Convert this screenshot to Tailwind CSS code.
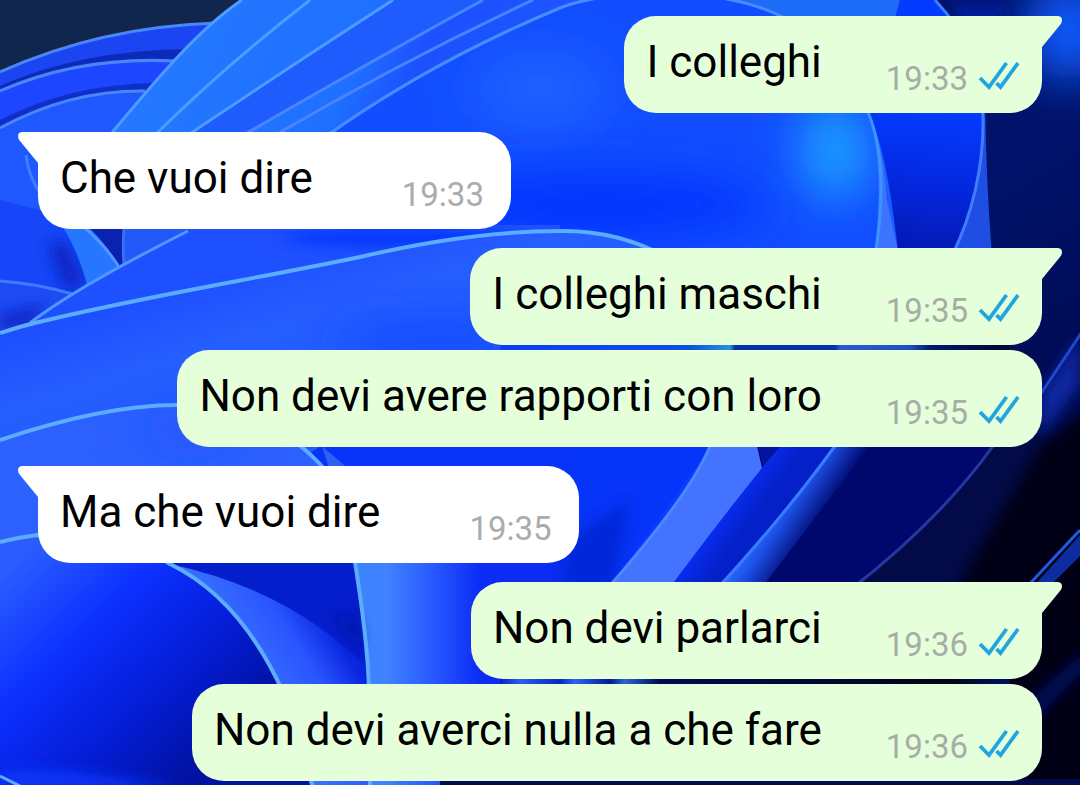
<!DOCTYPE html>
<html lang="it">
<head>
    <meta charset="utf-8"/>
    <meta name="viewport" content="width=device-width, initial-scale=1.0"/>
    <title>Chat</title>
    <script src="https://cdn.jsdelivr.net/npm/@tailwindcss/browser@4"></script>
</head>
<body class="relative min-h-screen overflow-x-hidden bg-[#0a3cff] font-[Roboto,sans-serif] text-black">
    <!-- Wallpaper -->
    <svg class="absolute inset-0 h-full w-full" viewBox="0 0 1080 785" preserveAspectRatio="xMidYMid slice" fill="none" aria-hidden="true">
        <defs>
            <filter id="soft" x="-200" y="-200" width="1500" height="1200" filterUnits="userSpaceOnUse"><feGaussianBlur stdDeviation="24"/></filter>
            <filter id="soft2" x="-200" y="-200" width="1500" height="1200" filterUnits="userSpaceOnUse"><feGaussianBlur stdDeviation="7"/></filter>
            <linearGradient id="blade" x1="200" y1="0" x2="540" y2="160" gradientUnits="userSpaceOnUse">
                <stop offset="0" stop-color="#2477ff"/><stop offset=".45" stop-color="#1e70ff"/><stop offset=".6" stop-color="#1d50ff"/><stop offset="1" stop-color="#1d58ff"/>
            </linearGradient>
            <linearGradient id="navy" x1="860" y1="260" x2="1060" y2="600" gradientUnits="userSpaceOnUse">
                <stop offset="0" stop-color="#00126a"/><stop offset=".6" stop-color="#000a50"/><stop offset="1" stop-color="#000014"/>
            </linearGradient>
            <linearGradient id="fold" x1="940" y1="110" x2="925" y2="256" gradientUnits="userSpaceOnUse">
                <stop offset="0" stop-color="#043cff"/><stop offset=".5" stop-color="#0428e0"/><stop offset="1" stop-color="#0418b0"/>
            </linearGradient>
            <linearGradient id="mid" x1="100" y1="280" x2="180" y2="540" gradientUnits="userSpaceOnUse">
                <stop offset="0" stop-color="#1a48ff"/><stop offset=".35" stop-color="#265eff"/><stop offset=".8" stop-color="#1f5cff"/><stop offset="1" stop-color="#2a60ff"/>
            </linearGradient>
            <linearGradient id="low" x1="20" y1="560" x2="210" y2="760" gradientUnits="userSpaceOnUse">
                <stop offset="0" stop-color="#2a5cff"/><stop offset=".35" stop-color="#0c30ff"/><stop offset=".7" stop-color="#041cd4"/><stop offset="1" stop-color="#0212a0"/>
            </linearGradient>
            <linearGradient id="stem" x1="355" y1="0" x2="480" y2="0" gradientUnits="userSpaceOnUse">
                <stop offset="0" stop-color="#3c84ff"/><stop offset=".25" stop-color="#4082ff"/><stop offset=".6" stop-color="#2a5cff"/><stop offset="1" stop-color="#0c2cf4"/>
            </linearGradient>
            <linearGradient id="leaf" x1="240" y1="660" x2="320" y2="610" gradientUnits="userSpaceOnUse">
                <stop offset="0" stop-color="#3a70ff"/><stop offset=".6" stop-color="#2a55ff"/><stop offset="1" stop-color="#0a26e0"/>
            </linearGradient>
            <linearGradient id="band" x1="690" y1="490" x2="745" y2="530" gradientUnits="userSpaceOnUse">
                <stop offset="0" stop-color="#2a5cff"/><stop offset=".5" stop-color="#0a30f8"/><stop offset="1" stop-color="#0420c8"/>
            </linearGradient>
            <linearGradient id="edge" x1="770" y1="500" x2="815" y2="530" gradientUnits="userSpaceOnUse">
                <stop offset="0" stop-color="#2f74ff"/><stop offset=".4" stop-color="#1c50e8"/><stop offset="1" stop-color="#00086e"/>
            </linearGradient>
            <linearGradient id="gapTop" x1="500" y1="0" x2="1000" y2="0" gradientUnits="userSpaceOnUse">
                <stop offset="0" stop-color="#0c3cf8"/><stop offset=".38" stop-color="#0c50e0"/><stop offset=".46" stop-color="#2894d8"/><stop offset=".47" stop-color="#0430a8"/><stop offset=".67" stop-color="#0430a8"/><stop offset=".68" stop-color="#2c58d0"/><stop offset=".82" stop-color="#2050c0"/><stop offset=".86" stop-color="#001a6c"/><stop offset="1" stop-color="#000838"/>
            </linearGradient>
            <linearGradient id="gapLow" x1="500" y1="0" x2="1000" y2="0" gradientUnits="userSpaceOnUse">
                <stop offset="0" stop-color="#0820c0"/><stop offset=".04" stop-color="#2c5cf0"/><stop offset=".12" stop-color="#0828c0"/><stop offset=".15" stop-color="#2c64f0"/><stop offset=".22" stop-color="#061a90"/><stop offset=".25" stop-color="#2c64d0"/><stop offset=".32" stop-color="#000a50"/><stop offset=".9" stop-color="#000418"/><stop offset="1" stop-color="#001058"/>
            </linearGradient>
        </defs>

        <!-- Night sky corner -->
        <path d="M0 0H260V100H0Z" fill="#11264c"/>

        <!-- Upper left petals -->
        <path d="M0 72Q100 27 215 23L240 140H0Z" fill="#1a45f0"/>
        <path d="M0 86Q80 50 190 49L180 62Q80 56 0 91Z" fill="#0c2bbb"/>
        <path d="M0 91Q80 56 175 61L190 150H0Z" fill="#1c46ff"/>
        <path d="M0 120Q70 84 156 83L145 91Q70 90 0 128Z" fill="#0f30c8"/>
        <path d="M0 128Q70 90 145 91L190 340H0Z" fill="#1f58ff"/>
        <g stroke="#4a86f5" stroke-width="3">
            <path d="M0 72Q100 27 215 23"/>
            <path d="M0 91Q80 56 175 61"/>
            <path d="M0 128Q70 90 145 91"/>
        </g>

        <!-- Large blades -->
        <path d="M242 0C200 28 160 75 110 135Q80 190 124 268L560 231L640 243L700 300H900L890 0Z" fill="url(#blade)"/>
        <path d="M393 0Q300 60 185 137H240L483 0Z" fill="#1f5cfe"/>
        <path d="M325 137Q430 62 560 8Q700 -30 775 15Q900 80 888 260H640L560 231L300 270Z" fill="#124eff"/>
        <ellipse cx="540" cy="90" rx="70" ry="40" fill="#1f60ff" filter="url(#soft)"/>
        <ellipse cx="600" cy="205" rx="170" ry="30" fill="#0430ff" filter="url(#soft)"/>
        <ellipse cx="835" cy="150" rx="34" ry="50" fill="#1fa0ff" filter="url(#soft)"/>
        <path d="M590 -4Q730 -14 785 18H960L935 -4Z" fill="#1d6cf8"/>
        <g stroke="#4d9cff" stroke-width="3">
            <path d="M242 0C200 28 160 75 110 135"/>
            <path d="M310 0Q225 66 155 135"/>
            <path d="M393 0Q300 60 185 137"/>
            <path d="M483 0Q370 62 240 137" stroke="#4a84ff"/>
            <path d="M533 0Q400 62 272 137" stroke="#4a84ff"/>
            <path d="M325 137Q430 62 560 8Q590 -4 640 -6Q730 -10 785 18" stroke="#4a8cff"/>
        </g>

        <!-- Right side fold -->
        <path d="M935 0C1000 60 992 180 952 256L900 270Q888 150 868 112L900 0Z" fill="url(#fold)"/>
        <path d="M935 0H1080V785H860L900 250L952 256C990 180 1000 60 935 0Z" fill="url(#navy)"/>
        <path d="M985 100Q982 190 952 256H992Q986 180 985 100Z" fill="#1e4ee4"/>
        <ellipse cx="1070" cy="30" rx="46" ry="50" fill="#0a5cff" filter="url(#soft)"/>
        <path d="M948 4H1000L1010 24H960Z" fill="#001a9c" filter="url(#soft2)"/>
        <path d="M868 112Q884 150 887 200L899 256H874Q886 170 868 112Z" fill="#3d74ff"/>
        <g stroke-width="3">
            <path d="M868 112Q890 165 875 256" stroke="#3d94ff"/>
            <path d="M935 0Q982 50 983 118Q984 190 952 256" stroke="#3f7cff"/>
        </g>

        <!-- Centre left -->
        <path d="M0 200L60 215L124 268L35 323L0 332Z" fill="#1646f8"/>
        <path d="M48 245L66 240L86 284L64 291Z" fill="#0a28c8" filter="url(#soft2)"/>
        <path d="M0 282Q40 282 72 294L35 323L0 332Z" fill="#1e4cf4"/>
        <path d="M0 314L45 304L35 323L0 332Z" fill="#0a28c8" filter="url(#soft2)"/>
        <path d="M62 226H85Q108 248 119 268L88 288Q78 250 62 226Z" fill="#2676ff"/>
        <path d="M88 226H124V265H118Q108 246 88 226Z" fill="#0a22b0"/>
        <path d="M124 226H200L124 268Z" fill="#2258f8"/>
        <path d="M188 231Q75 288 30 323L560 240V225H190Z" fill="#1f50ff"/>
        <ellipse cx="400" cy="238" rx="120" ry="8" fill="#0634ff" filter="url(#soft2)"/>
        <g stroke="#5098ff" stroke-width="3">
            <path d="M82 225Q105 245 119 267"/>
            <path d="M126 205Q122 240 124 264" stroke="#3e6cf0"/>
            <path d="M0 281Q40 284 72 294" stroke="#4478ff"/>
            <path d="M188 231Q75 288 30 323"/>
            <path d="M26 155Q28 176 42 196" stroke="#3c80ff"/>
        </g>

        <!-- Wide centre petal -->
        <path d="M0 332L35 323L360 257Q470 231 560 231Q620 230 672 260L760 360L708 450L600 600H0Z" fill="#0834f8"/>
        <path d="M0 332L35 323L360 257Q470 231 560 231Q620 230 672 260L640 350H470L310 453L327 480L160 560L0 545Z" fill="url(#mid)"/>
        <ellipse cx="440" cy="340" rx="110" ry="10" fill="#0c34ff" filter="url(#soft)"/>
        <path d="M0 440Q105 405 176 405Q270 405 327 472L350 570H0Z" fill="#2c60ff"/>
        <ellipse cx="190" cy="430" rx="50" ry="10" fill="#1f4cf8" filter="url(#soft)"/>
        <g stroke="#5cacff" stroke-width="4">
            <path d="M0 333Q18 327 35 323C140 297 250 280 360 257Q470 231 560 231Q620 230 672 260"/>
            <path d="M0 440Q105 405 176 405Q270 405 327 472"/>
        </g>
        <path d="M322 446L352 472H330Z" fill="#2c60f4"/>

        <!-- Lower left -->
        <path d="M150 555H480V785H200Z" fill="#041ecc"/>
        <path d="M353 555Q368 640 369 692V785H600V500H353Z" fill="url(#stem)"/>
        <path d="M170 564Q290 590 365 666L370 785H280Z" fill="url(#leaf)"/>
        <path d="M335 612L358 622L361 652Z" fill="#0212a0" filter="url(#soft2)"/>
        <path d="M0 542Q20 537 38 535Q120 530 170 564Q240 598 283 692L310 785H0Z" fill="url(#low)"/>
        <path d="M0 772Q60 764 180 790H0Z" fill="#0a34f8" filter="url(#soft2)"/>
        <g stroke="#5cacff" stroke-width="4">
            <path d="M0 542Q20 537 38 535Q120 530 170 564Q240 598 283 692L314 790"/>
            <path d="M353 550Q368 640 369 692L370 790"/>
            <path d="M0 776L24 788" stroke-width="3"/>
        </g>

        <!-- Lower right ribbons -->
        <path d="M578 446H710L606 590H560Z" fill="#0634f8"/>
        <path d="M570 540L630 500L612 590H560Z" fill="#0628d8" filter="url(#soft2)"/>
        <path d="M755 440H1000V600H640Z" fill="#00086e"/>
        <path d="M780 446L660 590H720L835 446Z" fill="url(#band)"/>
        <path d="M835 446Q785 515 716 590H760L870 446Z" fill="url(#edge)"/>
        <path d="M710 446Q690 495 606 590H668Q720 520 762 468L757 446Z" fill="#4474ff"/>
        <path d="M758 446H780L763 466Z" fill="#0414a0"/>
        <path d="M993 446Q940 520 850 590H1080V446Z" fill="#020a48"/>
        <path d="M1040 446L950 600H1100V400Z" fill="#000018" filter="url(#soft2)"/>
        <path d="M1080 336L1040 395V436L1080 385Z" fill="#0a28a0" filter="url(#soft2)"/>
        <path d="M1080 535L1030 590H1046L1080 556Z" fill="#0c2ca0"/>
        <path d="M1030 700L1085 650V670L1030 725Z" fill="#04085c" filter="url(#soft2)"/>
        <g stroke-width="3">
            <path d="M710 446Q690 495 606 590" stroke="#4c88ff"/>
            <path d="M835 446Q785 515 716 590" stroke="#3a7cff"/>
            <path d="M993 446Q940 520 850 590" stroke="#2438a0"/>
            <path d="M1080 530L1024 590" stroke="#2058e0"/>
            <path d="M1082 332L1040 395" stroke="#1c48d0"/>
        </g>

        <!-- Slivers between stacked bubbles -->
        <path d="M500 343H1010V352H500Z" fill="url(#gapTop)"/>
        <path d="M500 677H1010V686H500Z" fill="url(#gapLow)"/>
        <path d="M440 779H1080V785H440Z" fill="#000a4c"/>
    </svg>

    <!-- Read receipt icon -->
    <svg class="hidden" aria-hidden="true">
        <symbol id="ticks" viewBox="0 0 42 30">
            <path d="M2 17L11 26L28.500 2M18.500 22L22.500 26L40 2" fill="none" stroke="#1fa5e0" stroke-width="3.800"/>
        </symbol>
    </svg>

    <!-- Messages -->
    <main class="relative flex flex-col gap-[19px] px-[38px] pt-4 pb-1">
        <section class="flex flex-col items-end gap-[5px]">
            <article class="relative flex items-end rounded-[32px] rounded-tr-none bg-[#e6ffdb] pt-5 pr-[22px] pb-[14px] pl-[22px]">
                <svg class="absolute top-0 -right-5 h-8 w-6" viewBox="0 0 24 32" aria-hidden="true"><path d="M0 0H19Q24 0 24 4Q24 7 22 9L4 31H0Z" fill="#e6ffdb"/></svg>
                <p class="mb-[11px] text-[44px] leading-[52px]">I colleghi</p>
                <time class="ml-16 text-[33px] leading-[40px] text-[#a6ada6]">19:33</time>
                <svg class="mb-2 ml-[10px] h-[30px] w-[42px]" role="img" aria-label="Letto"><use href="#ticks"/></svg>
            </article>
        </section>

        <section class="flex flex-col items-start gap-[5px]">
            <article class="relative flex items-end rounded-[32px] rounded-tl-none bg-white pt-5 pr-[27px] pb-[14px] pl-[22px]">
                <svg class="absolute top-0 -left-5 h-8 w-6" viewBox="0 0 24 32" aria-hidden="true"><path d="M24 0H5Q0 0 0 4Q0 7 2 9L20 31H24Z" fill="#fff"/></svg>
                <p class="mb-[11px] text-[44px] leading-[52px]">Che vuoi dire</p>
                <time class="ml-[89px] text-[33px] leading-[40px] text-[#a8acae]">19:33</time>
            </article>
        </section>

        <section class="flex flex-col items-end gap-[5px]">
            <article class="relative flex items-end rounded-[32px] rounded-tr-none bg-[#e6ffdb] pt-5 pr-[22px] pb-[14px] pl-[22px]">
                <svg class="absolute top-0 -right-5 h-8 w-6" viewBox="0 0 24 32" aria-hidden="true"><path d="M0 0H19Q24 0 24 4Q24 7 22 9L4 31H0Z" fill="#e6ffdb"/></svg>
                <p class="mb-[11px] text-[44px] leading-[52px]">I colleghi maschi</p>
                <time class="ml-16 text-[33px] leading-[40px] text-[#a6ada6]">19:35</time>
                <svg class="mb-2 ml-[10px] h-[30px] w-[42px]" role="img" aria-label="Letto"><use href="#ticks"/></svg>
            </article>
            <article class="relative flex items-end rounded-[32px] bg-[#e6ffdb] pt-5 pr-[22px] pb-[14px] pl-[22px]">
                <p class="mb-[11px] text-[44px] leading-[52px]">Non devi avere rapporti con loro</p>
                <time class="ml-16 text-[33px] leading-[40px] text-[#a6ada6]">19:35</time>
                <svg class="mb-2 ml-[10px] h-[30px] w-[42px]" role="img" aria-label="Letto"><use href="#ticks"/></svg>
            </article>
        </section>

        <section class="flex flex-col items-start gap-[5px]">
            <article class="relative flex items-end rounded-[32px] rounded-tl-none bg-white pt-5 pr-[27px] pb-[14px] pl-[22px]">
                <svg class="absolute top-0 -left-5 h-8 w-6" viewBox="0 0 24 32" aria-hidden="true"><path d="M24 0H5Q0 0 0 4Q0 7 2 9L20 31H24Z" fill="#fff"/></svg>
                <p class="mb-[11px] text-[44px] leading-[52px]">Ma che vuoi dire</p>
                <time class="ml-[89px] text-[33px] leading-[40px] text-[#a8acae]">19:35</time>
            </article>
        </section>

        <section class="flex flex-col items-end gap-[5px]">
            <article class="relative flex items-end rounded-[32px] rounded-tr-none bg-[#e6ffdb] pt-5 pr-[22px] pb-[14px] pl-[22px]">
                <svg class="absolute top-0 -right-5 h-8 w-6" viewBox="0 0 24 32" aria-hidden="true"><path d="M0 0H19Q24 0 24 4Q24 7 22 9L4 31H0Z" fill="#e6ffdb"/></svg>
                <p class="mb-[11px] text-[44px] leading-[52px]">Non devi parlarci</p>
                <time class="ml-16 text-[33px] leading-[40px] text-[#a6ada6]">19:36</time>
                <svg class="mb-2 ml-[10px] h-[30px] w-[42px]" role="img" aria-label="Letto"><use href="#ticks"/></svg>
            </article>
            <article class="relative flex items-end rounded-[32px] bg-[#e6ffdb] pt-5 pr-[22px] pb-[14px] pl-[22px]">
                <p class="mb-[11px] text-[44px] leading-[52px]">Non devi averci nulla a che fare</p>
                <time class="ml-16 text-[33px] leading-[40px] text-[#a6ada6]">19:36</time>
                <svg class="mb-2 ml-[10px] h-[30px] w-[42px]" role="img" aria-label="Letto"><use href="#ticks"/></svg>
            </article>
        </section>
    </main>
</body>
</html>
